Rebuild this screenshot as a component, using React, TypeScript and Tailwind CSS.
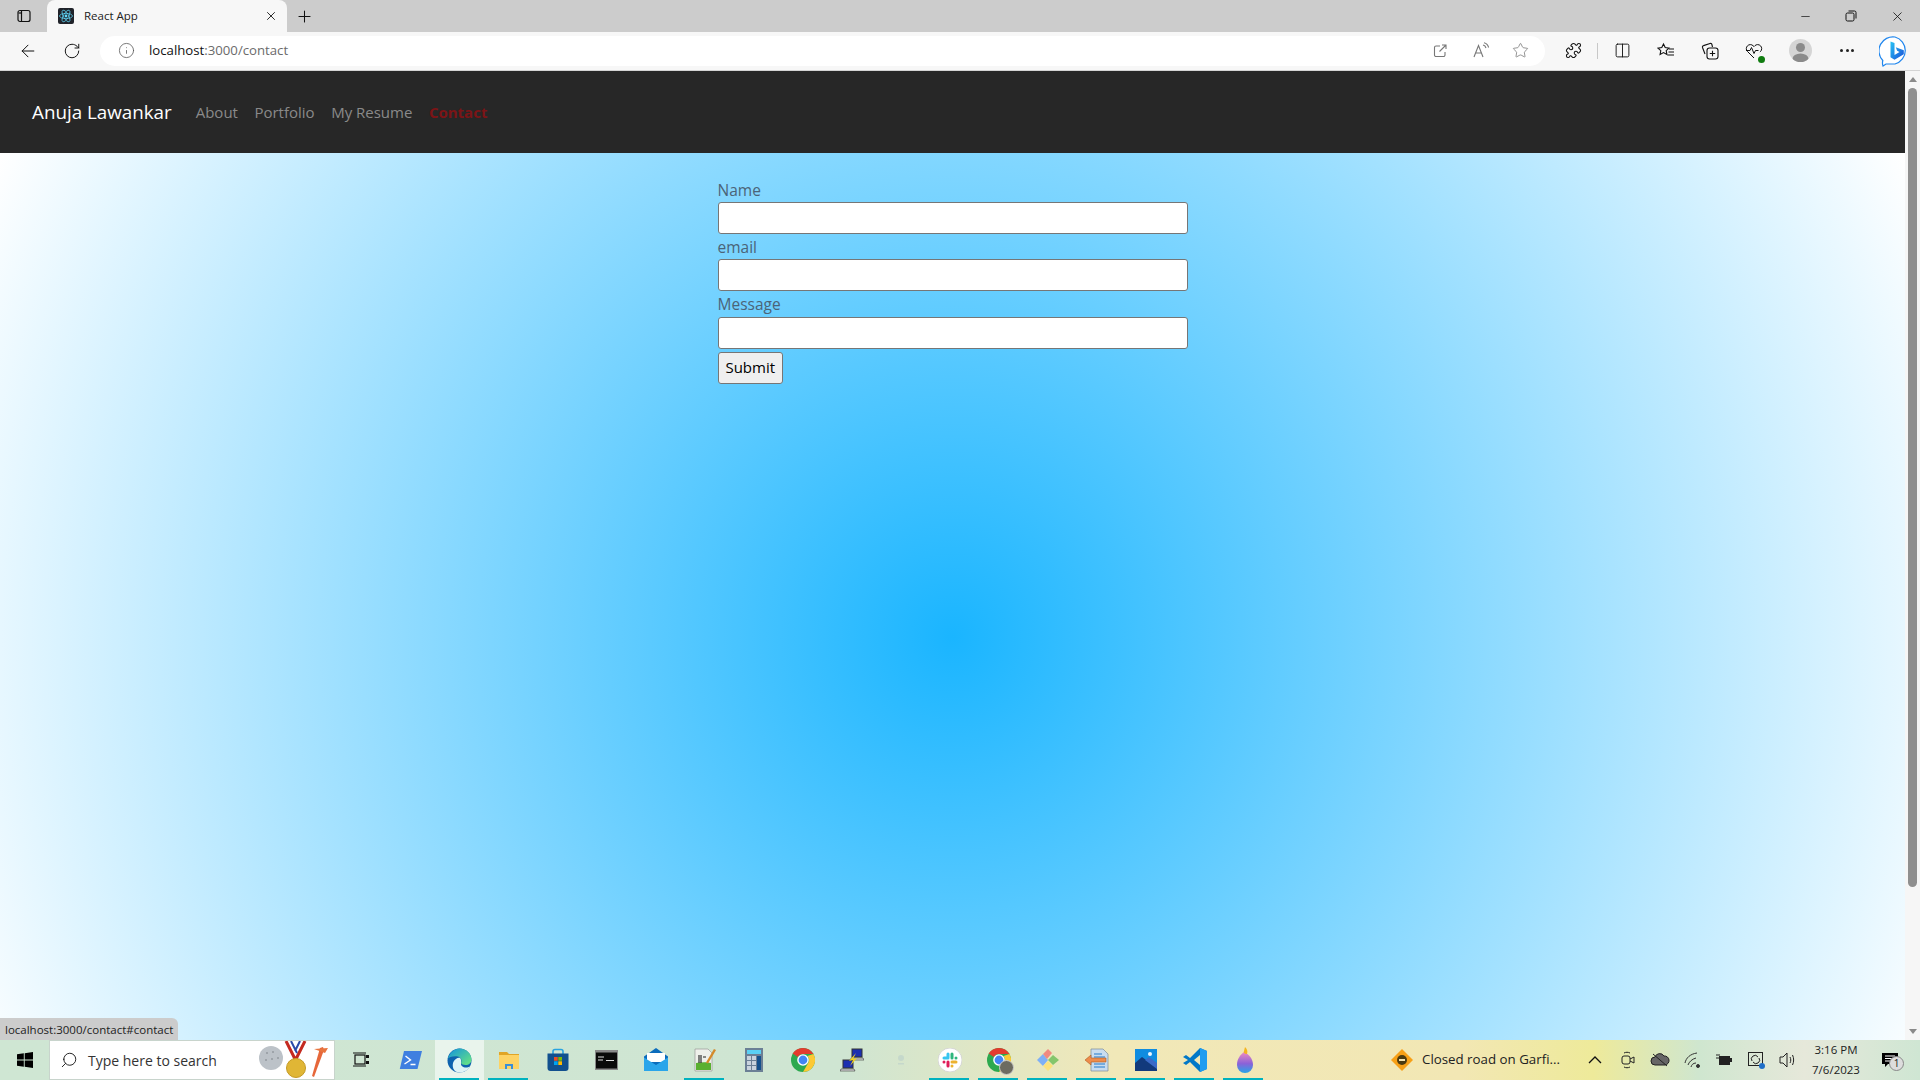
import { ArrowLeft, Columns2, Info, Minus, Plus, Puzzle, RotateCw, Search, Star, X } from "lucide-react";

const uiFont = "font-['Open_Sans','Noto_Sans',sans-serif]";

function Favicon() {
  return (
    <svg width="16" height="16" viewBox="0 0 16 16" className="rounded-[2px] bg-[#20232a]">
      <circle cx="8" cy="8" r="1.4" fill="#61dafb" />
      <g fill="none" stroke="#61dafb" strokeWidth="0.7">
        <ellipse cx="8" cy="8" rx="6.5" ry="2.6" />
        <ellipse cx="8" cy="8" rx="6.5" ry="2.6" transform="rotate(60 8 8)" />
        <ellipse cx="8" cy="8" rx="6.5" ry="2.6" transform="rotate(120 8 8)" />
      </g>
    </svg>
  );
}

function TabStrip() {
  return (
    <div className="flex h-8 shrink-0 items-end bg-[#cccccc]">
      <div className="flex h-8 w-[47px] items-center justify-center">
        <svg width="16" height="16" viewBox="0 0 16 16" fill="none" stroke="#111" strokeWidth="1.2">
          <rect x="2" y="2.5" width="12" height="11" rx="2" />
          <path d="M5.5 3v10" />
          <path d="M2.5 5h3" />
        </svg>
      </div>
      <div className="flex h-8 w-[240px] items-center rounded-t-lg bg-[#f7f7f7] pr-[9px] pl-[11px]">
        <Favicon />
        <span className="ml-[10px] flex-1 text-[11.5px] text-[#222]">React App</span>
        <X size={14} strokeWidth={1.5} className="text-[#111]" />
      </div>
      <div className="flex h-8 w-[34px] items-center justify-center">
        <Plus size={19} strokeWidth={1.3} className="text-[#111]" />
      </div>
      <div className="flex-1" />
      <div className="flex h-8 items-center text-[#111]">
        <div className="flex w-[46px] justify-center">
          <Minus size={13} strokeWidth={1.3} />
        </div>
        <div className="flex w-[46px] justify-center">
          <svg width="12" height="12" viewBox="0 0 12 12" fill="none" stroke="#111" strokeWidth="1">
            <rect x="1" y="3" width="8" height="8" rx="1.5" />
            <path d="M3.5 1h6a1.5 1.5 0 0 1 1.5 1.5v6" />
          </svg>
        </div>
        <div className="flex w-[46px] justify-center">
          <X size={15} strokeWidth={1.3} />
        </div>
      </div>
    </div>
  );
}

function ToolbarIcons() {
  return (
    <div className="flex h-full items-center">
      <div className="ml-[16px] flex w-[24px] justify-center">
        <Puzzle size={17} strokeWidth={1.5} className="text-[#111]" />
      </div>
      <div className="ml-[12px] h-4 w-px bg-[#c8c8c8]" />
      <div className="ml-[12px] flex w-[24px] justify-center">
        <Columns2 size={17} strokeWidth={1.3} className="text-[#111]" />
      </div>
      <div className="ml-[20px] flex w-[24px] justify-center">
        <svg width="18" height="18" viewBox="0 0 18 18" fill="none" stroke="#111" strokeWidth="1.1">
          <path d="M6.5 2l1.7 3.6 3.8.5-2.8 2.6.7 3.8-3.4-1.9L3.1 12.5l.7-3.8L1 6.1l3.8-.5z" />
          <path d="M12 7h5M11.5 10h5.5M10.5 13h6.5" />
        </svg>
      </div>
      <div className="ml-[20px] flex w-[24px] justify-center">
        <svg width="18" height="18" viewBox="0 0 18 18" fill="none" stroke="#111" strokeWidth="1.1">
          <path d="M4 12L1.5 5.5a1.5 1.5 0 0 1 1-1.9L9 1.5a1.5 1.5 0 0 1 1.9 1L11.5 5" />
          <rect x="6" y="6" width="11" height="11" rx="2.5" />
          <path d="M11.5 8.8v5.4M8.8 11.5h5.4" />
        </svg>
      </div>
      <div className="relative ml-[20px] flex w-[24px] justify-center">
        <svg width="18" height="18" viewBox="0 0 18 18" fill="none" stroke="#111" strokeWidth="1">
          <path d="M9 16L2.5 9.5a4 4 0 0 1 0-5.7 4 4 0 0 1 5.7 0l.8.8.8-.8a4 4 0 0 1 5.7 0 4 4 0 0 1 0 5.7l-.6.6" />
          <path d="M1 8.500h4l1.500-3 2.500 6 1.500-3h3" />
        </svg>
        <span className="absolute right-[1px] bottom-[-3px] h-[7px] w-[7px] rounded-full bg-[#107c10]" />
      </div>
      <div className="ml-[23px] flex h-[23px] w-[23px] items-end justify-center overflow-hidden rounded-full bg-[#d5d5d5]">
        <svg width="23" height="23" viewBox="0 0 23 23" fill="#8b8b8b">
          <circle cx="11.5" cy="8.5" r="4.5" />
          <ellipse cx="11.5" cy="20" rx="8" ry="5.5" />
        </svg>
      </div>
      <div className="ml-[23px] flex w-[24px] justify-center gap-[2.5px]">
        <span className="h-[3px] w-[3px] rounded-full bg-[#222]" />
        <span className="h-[3px] w-[3px] rounded-full bg-[#222]" />
        <span className="h-[3px] w-[3px] rounded-full bg-[#222]" />
      </div>
      <div className="ml-[20px]">
        <svg width="32" height="32" viewBox="0 0 32 32">
          <defs>
            <linearGradient id="bingB" x1="0" y1="0" x2="1" y2="1">
              <stop offset="0" stopColor="#28c4f4" />
              <stop offset="1" stopColor="#1a4fd8" />
            </linearGradient>
          </defs>
          <path
            d="M16 2a14 14 0 0 1 0 27H7l-3 2c-.7-2-.6-4-.2-5.500A14 14 0 0 1 16 2z"
            fill="#fff"
            stroke="#1f86ee"
            strokeWidth="1.2"
          />
          <path
            d="M11.500 6.500l4 1.500v12l5-3-2.400-1.200-1.300-3.600 8 3v4l-9.300 5.500-4-2.500z"
            fill="url(#bingB)"
          />
        </svg>
      </div>
    </div>
  );
}

function Toolbar() {
  return (
    <div className="flex h-[39px] shrink-0 items-center border-b border-[#d4d4d4] bg-[#f7f7f7] pb-px">
      <div className="flex w-[100px] items-center">
        <ArrowLeft size={20} strokeWidth={1.2} className="ml-[18px] text-[#111]" />
        <RotateCw size={18} strokeWidth={1.3} className="ml-[25px] text-[#111]" />
      </div>
      <div className="flex h-[30px] w-[1445px] items-center rounded-full bg-white pr-[16px] pl-[18px]">
        <Info size={17} strokeWidth={1.1} className="text-[#555]" />
        <span className="ml-[14px] flex-1 text-[13.2px] text-[#6b6b6b]">
          <span className="text-[#111]">localhost</span>:3000/contact
        </span>
        <svg width="14" height="14" viewBox="0 0 14 14" fill="none" stroke="#777" strokeWidth="1.1" className="mr-[26px]">
          <path d="M7 2H3a1.500 1.500 0 0 0-1.500 1.500v7.500A1.500 1.500 0 0 0 3 12.500h7.500a1.500 1.500 0 0 0 1.500-1.500V8" />
          <path d="M6.500 7.500L13 1M9 1h4v4" />
        </svg>
        <svg width="17" height="17" viewBox="0 0 17 17" fill="none" stroke="#777" strokeWidth="1.1" className="mr-[22px]">
          <path d="M1 15L5.500 3.500 10 15M2.800 11h5.500" />
          <path d="M10 3c1.500.3 2.500 1.300 3 3M11 .8c2.300.5 4 2.200 4.600 4.700" />
        </svg>
        <Star size={17} strokeWidth={1.1} className="text-[#777]" />
      </div>
      <ToolbarIcons />
    </div>
  );
}

function Navbar() {
  return (
    <nav className="flex h-[82px] shrink-0 items-center bg-[#272727] pl-8">
      <a href="#home" className="text-[18.8px] text-white">
        Anuja Lawankar
      </a>
      <div className="ml-[24px] flex items-center gap-[16.5px] text-[15px] text-[#8a8a8a]">
        <a href="#about">About</a>
        <a href="#portfolio">Portfolio</a>
        <a href="#resume">My Resume</a>
        <a href="#contact" className="font-bold text-[#7c1416]">
          Contact
        </a>
      </div>
    </nav>
  );
}

function Field({ label }: { label: string }) {
  return (
    <div>
      <label className="block h-[25.5px] pt-[1px] text-[15.5px] leading-6 text-[#4b6478]">{label}</label>
      <input type="text" className="block h-[31.9px] w-full rounded-[3px] border border-[#767676] bg-white" />
    </div>
  );
}

function ContactForm() {
  return (
    <form className="mx-auto w-[470px] pt-[23.5px]">
      <Field label="Name" />
      <Field label="email" />
      <Field label="Message" />
      <button
        type="button"
        className="mt-[3px] h-[32px] w-[65.5px] rounded-[3px] border border-[#767676] bg-[#efefef] text-[15px] text-black"
      >
        Submit
      </button>
    </form>
  );
}

function Scrollbar() {
  return (
    <div className="flex w-[15px] shrink-0 flex-col items-center bg-[#f6f6f6]">
      <div className="mt-[6px] h-0 w-0 border-x-[4px] border-b-[5px] border-x-transparent border-b-[#8a8a8a]" />
      <div className="mt-[6px] h-[799px] w-[9px] rounded-full bg-[#8f8f8f]" />
      <div className="flex-1" />
      <div className="mb-[6px] h-0 w-0 border-x-[4px] border-t-[5px] border-x-transparent border-t-[#8a8a8a]" />
    </div>
  );
}

function Windows() {
  return (
    <svg width="16" height="16" viewBox="0 0 16 16" fill="#000">
      <path d="M0 2.300L6.800 1.300v6.300H0zM7.700 1.200L16 0v7.600H7.700zM0 8.400h6.800v6.300L0 13.700zM7.700 8.400H16V16l-8.300-1.200z" />
    </svg>
  );
}

function Chrome() {
  return (
    <svg width="24" height="24" viewBox="0 0 24 24">
      <circle cx="12" cy="12" r="12" fill="#2da94f" />
      <path d="M12 0a12 12 0 0 1 10.400 6H12a6 6 0 0 0-5.200 3L1.700 5.500A12 12 0 0 1 12 0z" fill="#e33b2e" />
      <path d="M22.400 6A12 12 0 0 1 12 24l5.200-9A6 6 0 0 0 16.500 8z" fill="#fcc934" />
      <circle cx="12" cy="12" r="5.800" fill="#fff" />
      <circle cx="12" cy="12" r="4.400" fill="#4285f4" />
    </svg>
  );
}

const icons = [
  {
    id: "taskview",
    bar: false,
    svg: (
      <svg width="17" height="16" viewBox="0 0 17 16" fill="none" stroke="#111" strokeWidth="1.200">
        <rect x="2" y="3" width="10" height="9" />
        <path d="M0 1h13M0 14h13" />
        <path d="M14.500 3v3M14.500 9v3" strokeWidth="3" />
      </svg>
    ),
  },
  {
    id: "powershell",
    bar: false,
    svg: (
      <svg width="24" height="20" viewBox="0 0 24 20">
        <path d="M5 1h18l-4.500 18H.8z" fill="#3f7fe0" />
        <path d="M6.500 6l5 4-6 4M11.500 14.500h5" fill="none" stroke="#fff" strokeWidth="1.400" />
      </svg>
    ),
  },
  {
    id: "edge",
    bar: true,
    active: true,
    svg: (
      <svg width="25" height="25" viewBox="0 0 25 25">
        <defs>
          <linearGradient id="edgeG" x1="0.2" y1="0" x2="1" y2="0.7">
            <stop offset="0" stopColor="#1a9ad6" />
            <stop offset="1" stopColor="#5fdc8a" />
          </linearGradient>
        </defs>
        <circle cx="12.500" cy="12.500" r="12" fill="#0e62ae" />
        <path d="M.8 11C2.500 4 8 .5 12.500.5c7 0 12 5.500 12 11 0 3.500-2.500 5.500-6 5.500-2.500 0-4-1-4.500-2 1.200-2 .5-5.500-3-6.500-4-1-9.200.3-10.700 2.500z" fill="url(#edgeG)" />
        <path d="M14 15c-.5 3 2.500 5 6 4.500 1.500-.2 2.500-.6 3-1-1.800 3.600-6 6-10 6-1.500 0-2.800-.3-3.800-.8-3.500-2-4.200-6.500-2.700-10 1-2.300 3.500-4 5.500-4 1.500 0 2.500 1.500 2 5.300z" fill="#dff3f6" />
      </svg>
    ),
  },
  {
    id: "folder",
    bar: true,
    svg: (
      <svg width="22" height="20" viewBox="0 0 22 20">
        <path d="M1 2h8l2 2h10v3H1z" fill="#e0a526" />
        <path d="M1 5h20v14H1z" fill="#fdd364" />
        <path d="M7 19v-5h8v5h-2v-3H9v3z" fill="#3a8fd8" />
      </svg>
    ),
  },
  {
    id: "store",
    bar: false,
    svg: (
      <svg width="24" height="24" viewBox="0 0 24 24">
        <path d="M7 6V3.500A2 2 0 0 1 9 1.500h6a2 2 0 0 1 2 2V6" fill="none" stroke="#29a3e0" strokeWidth="1.600" />
        <path d="M1.500 5.500h21V20a3 3 0 0 1-3 3h-15a3 3 0 0 1-3-3z" fill="#11508e" />
        <rect x="8" y="9" width="3.700" height="3.700" fill="#ea4f25" />
        <rect x="12.300" y="9" width="3.700" height="3.700" fill="#7fba00" />
        <rect x="8" y="13.300" width="3.700" height="3.700" fill="#00a4ef" />
        <rect x="12.300" y="13.300" width="3.700" height="3.700" fill="#ffb900" />
      </svg>
    ),
  },
  {
    id: "cmd",
    bar: false,
    svg: (
      <svg width="23" height="20" viewBox="0 0 23 20">
        <rect x="0" y="0" width="23" height="20" fill="#8a8a8a" />
        <rect x="1" y="2.500" width="21" height="16" fill="#0a0a0a" />
        <path d="M3 7h6M11 10.500h8M3 10h5" stroke="#ddd" strokeWidth="1.200" />
      </svg>
    ),
  },
  {
    id: "mail",
    bar: false,
    svg: (
      <svg width="24" height="24" viewBox="0 0 24 24">
        <path d="M0 8.500L12 0l12 8.500V23H0z" fill="#0b6cbc" />
        <path d="M3 5h18v9H3z" fill="#fff" />
        <path d="M0 9.500L12 17 24 9.500V23H0z" fill="#2aa5ea" />
      </svg>
    ),
  },
  {
    id: "notepad",
    bar: true,
    svg: (
      <svg width="24" height="24" viewBox="0 0 24 24">
        <path d="M2 1h13l4 4v18H2z" fill="#eef0ea" stroke="#9a9a9a" strokeWidth="0.700" />
        <path d="M3 15c5-1 11-1 15 0v7H3z" fill="#5ab030" />
        <path d="M6 7v8M8 7v8M10 9h3" stroke="#222" strokeWidth="1.100" />
        <path d="M14 15L22 1.500" stroke="#d48a2a" strokeWidth="2.400" />
      </svg>
    ),
  },
  {
    id: "calc",
    bar: false,
    svg: (
      <svg width="18" height="24" viewBox="0 0 18 24">
        <rect width="18" height="24" fill="#6b7f95" />
        <rect x="2" y="2" width="14" height="4" fill="#5ad0f5" />
        <g fill="#c9d3de">
          <rect x="2" y="8" width="4" height="4" />
          <rect x="7" y="8" width="4" height="4" />
          <rect x="2" y="13" width="4" height="4" />
          <rect x="7" y="13" width="4" height="4" />
          <rect x="2" y="18" width="4" height="4" />
          <rect x="7" y="18" width="4" height="4" />
        </g>
        <rect x="12" y="8" width="4" height="14" fill="#15508c" />
      </svg>
    ),
  },
  { id: "chrome", bar: false, svg: <Chrome /> },
  {
    id: "putty",
    bar: false,
    svg: (
      <svg width="24" height="24" viewBox="0 0 24 24">
        <rect x="12" y="1" width="10" height="8" fill="#1c2fb0" stroke="#333" />
        <path d="M11 10h12l1 2H11z" fill="#ddd" stroke="#333" strokeWidth="0.600" />
        <rect x="3" y="12" width="10" height="8" fill="#1c2fb0" stroke="#333" />
        <path d="M1 21h13l1 2H0z" fill="#ddd" stroke="#333" strokeWidth="0.600" />
        <path d="M16 5l-7 8 4-1-3 6 7-8-4 1z" fill="#f4d31f" />
      </svg>
    ),
  },
  {
    id: "faded",
    bar: false,
    svg: (
      <svg width="8" height="12" viewBox="0 0 8 12" fill="#c5d8cb">
        <circle cx="4" cy="4" r="3" />
        <rect x="1" y="9" width="6" height="1.500" />
      </svg>
    ),
  },
  {
    id: "slack",
    bar: true,
    svg: (
      <svg width="24" height="24" viewBox="0 0 24 24">
        <circle cx="12" cy="12" r="12" fill="#fff" stroke="#cfcfcf" strokeWidth="0.800" />
        <g strokeWidth="3" strokeLinecap="round">
          <path d="M10 6v4M6 10h4" stroke="#36c5f0" />
          <path d="M14 6v4M18 10h0" stroke="#2eb67d" />
          <path d="M14 14h4M14 18h0" stroke="#ecb22e" />
          <path d="M6 14h0M10 14v4" stroke="#e01e5a" />
        </g>
      </svg>
    ),
  },
  {
    id: "chrome2",
    bar: true,
    svg: (
      <div className="relative">
        <Chrome />
        <span className="absolute right-[-3px] bottom-[-3px] h-[15px] w-[15px] rounded-full border border-[#ccc] bg-[#6c6b60]" />
      </div>
    ),
  },
  {
    id: "git",
    bar: true,
    svg: (
      <svg width="24" height="24" viewBox="0 0 24 24">
        <path d="M1 12l6-6 5 6-5 6z" fill="#7fb0f5" />
        <path d="M7 6l5-5 4 4-5 6z" fill="#f08a80" />
        <path d="M12 12l5-5 6 5-6 5z" fill="#84c66c" />
        <path d="M7 18l5-5 5 5-5 5z" fill="#fde27c" />
      </svg>
    ),
  },
  {
    id: "transfer",
    bar: true,
    svg: (
      <svg width="24" height="24" viewBox="0 0 24 24">
        <path d="M6 1h12l5 5v17H6z" fill="#c8dcf0" stroke="#7a8a9a" strokeWidth="0.700" />
        <path d="M9 6h8M9 9h11M9 16h11M9 19h11" stroke="#5a9ad8" strokeWidth="1.400" />
        <path d="M0 12l6-5v3h15v4H6v3z" fill="#ee8c4c" stroke="#b05a20" strokeWidth="0.600" />
      </svg>
    ),
  },
  {
    id: "photos",
    bar: true,
    svg: (
      <svg width="22" height="22" viewBox="0 0 22 22">
        <rect width="22" height="22" fill="#0f8ce0" />
        <circle cx="15" cy="5" r="2" fill="#eaf6ff" />
        <path d="M0 22V14l7-6 15 11v3z" fill="#123a7c" />
        <path d="M10 11l4-3 8 6v6z" fill="#3a6ac8" />
      </svg>
    ),
  },
  {
    id: "vscode",
    bar: true,
    svg: (
      <svg width="24" height="24" viewBox="0 0 24 24">
        <path d="M17 0l7 3v18l-7 3-10-10-4 3-3-2 5-3-5-3 3-2 4 3z" fill="#0078c8" />
        <path d="M17 0l7 3v18l-7 3z" fill="#1f9cf0" />
        <path d="M17 7l-6 5 6 5z" fill="#f1e8b8" />
      </svg>
    ),
  },
  {
    id: "paint",
    bar: true,
    svg: (
      <svg width="20" height="26" viewBox="0 0 20 26">
        <defs>
          <linearGradient id="paintG" x1="0" y1="0" x2="0" y2="1">
            <stop offset="0" stopColor="#f08ac0" />
            <stop offset="0.550" stopColor="#8b62d8" />
            <stop offset="1" stopColor="#25a5e8" />
          </linearGradient>
        </defs>
        <path d="M10 5c5 2 9 7 9 13a8 8 0 0 1-16 0C3 12 6 8 10 5z" fill="url(#paintG)" />
        <path d="M11 0c2 2 3 4 2 7-2 0-4-1-3-3z" fill="#f4b51f" />
      </svg>
    ),
  },
];

function TaskbarItem({ bar, active, children }: { bar: boolean; active?: boolean; children: React.ReactNode }) {
  return (
    <div
      className={
        active
          ? "relative flex h-10 w-[49px] items-center justify-center bg-[#e9f4ec]"
          : "relative flex h-10 w-[49px] items-center justify-center"
      }
    >
      {children}
      {bar && <span className="absolute bottom-0 left-[4px] h-[2px] w-[40px] bg-[#00b2bf]" />}
    </div>
  );
}

function Taskbar() {
  return (
    <div className="flex h-10 shrink-0 items-center bg-[linear-gradient(90deg,#cfe6d3_0%,#cfe5d2_44%,#f1e8b8_58%,#f2e7b4_76%,#eeea9a_83%,#cfe6cf_88.5%,#e6e8da_94%,#cfe6d3_100%)] text-[#111]">
      <div className="flex w-[49px] justify-center">
        <Windows />
      </div>
      <div className="mr-[2px] flex h-[40px] w-[286px] items-center overflow-hidden border border-[#c8d4cc] bg-white pl-[10px]">
        <Search size={18} strokeWidth={1.200} className="-scale-x-100 text-[#111]" />
        <span className="ml-[10px] flex-1 text-[14px] text-[#333]">Type here to search</span>
        <svg width="72" height="38" viewBox="0 0 72 38" className="mr-[3px]">
          <circle cx="12" cy="17" r="12" fill="#bcc2c8" />
          <g fill="#959aa0">
            <circle cx="8" cy="12" r="1" />
            <circle cx="14" cy="11" r="1" />
            <circle cx="7" cy="19" r="1" />
            <circle cx="13" cy="18" r="1" />
            <circle cx="19" cy="17" r="1" />
          </g>
          <path d="M27 0l9 18M46 0l-9 18" stroke="#c42a20" strokeWidth="3" />
          <path d="M32 0l6 12M41 0l-5 10" stroke="#2a4aa8" strokeWidth="2" />
          <circle cx="37" cy="27" r="9.500" fill="#e0b635" stroke="#c49a25" />
          <path d="M64 6l-3 1-8 28 2 1 10-27z" fill="#e6673a" />
          <path d="M55 8l14-1-3 5z" fill="#e8743e" />
        </svg>
      </div>
      {icons.map((item) => (
        <TaskbarItem key={item.id} bar={item.bar} active={item.active}>
          {item.svg}
        </TaskbarItem>
      ))}
      <div className="ml-[123px] flex items-center">
        <svg width="22" height="22" viewBox="0 0 22 22">
          <path d="M11 0l11 11-11 11L0 11z" fill="#f7a016" />
          <circle cx="11" cy="11" r="5" fill="#4a3a10" />
          <rect x="8" y="10" width="6" height="2" fill="#f4e3b0" />
        </svg>
        <span className="ml-[9px] w-[139px] text-[13.300px] whitespace-nowrap text-[#222]">Closed road on Garfi...</span>
      </div>
      <svg width="14" height="10" viewBox="0 0 14 10" fill="none" stroke="#111" strokeWidth="1.300" className="ml-[27px]">
        <path d="M1 8l6-6 6 6" />
      </svg>
      <svg width="14" height="18" viewBox="0 0 14 18" fill="none" stroke="#222" strokeWidth="1" className="ml-[19px]">
        <rect x="1" y="5" width="8" height="8" rx="2" />
        <path d="M9 8l4-2v6l-4-2M3 2c2-1 4-1 6 0M3 16c2 1 4 1 6 0" />
      </svg>
      <svg width="20" height="16" viewBox="0 0 20 16" fill="#666" stroke="#222" strokeWidth="1" className="ml-[15px]">
        <path d="M5 13a4 4 0 0 1 0-8 5 5 0 0 1 9-1 4.500 4.500 0 0 1 1 9z" />
        <path d="M3 2l14 12" />
      </svg>
      <svg width="18" height="16" viewBox="0 0 18 16" fill="none" stroke="#333" strokeWidth="1" className="ml-[14px]">
        <path d="M1 11c1-5 5-9 12-10M4 13c1-3 4-6 8-7M7 15c.5-2 2-4 5-4" />
        <circle cx="14" cy="14" r="1.500" fill="#333" />
      </svg>
      <svg width="16" height="12" viewBox="0 0 16 12" className="ml-[14px]">
        <rect x="3" y="2" width="11" height="9" fill="#222" />
        <rect x="14" y="4" width="2" height="4" fill="#222" />
        <path d="M0 1h4M0 4h4" stroke="#222" />
      </svg>
      <div className="relative ml-[16px]">
        <svg width="16" height="16" viewBox="0 0 16 16" fill="none" stroke="#222" strokeWidth="1">
          <rect x=".5" y=".5" width="14" height="13" />
          <path d="M4 9a3.500 3.500 0 0 1 6-4M11 6a3.500 3.500 0 0 1-6 4" />
        </svg>
        <span className="absolute right-[-1px] bottom-[-1px] h-[6px] w-[6px] rounded-full bg-[#1f6fc8]" />
      </div>
      <svg width="18" height="16" viewBox="0 0 18 16" fill="none" stroke="#222" strokeWidth="1" className="ml-[15px]">
        <path d="M1 5h3l4-4v14l-4-4H1zM11 5c1 2 1 4 0 6M13.500 3c1.500 3 1.500 7 0 10" />
      </svg>
      <div className="ml-[14px] flex w-[50px] flex-col items-center text-[11.500px] leading-[20px] text-[#222]">
        <span className="whitespace-nowrap">3:16 PM</span>
        <span className="whitespace-nowrap">7/6/2023</span>
      </div>
      <div className="relative ml-[21px]">
        <svg width="16" height="16" viewBox="0 0 16 16" fill="#000">
          <path d="M0 1h16v11H6l-3 3v-3H0z" />
          <path d="M3 4h10M3 6.500h10M3 9h7" stroke="#fff" />
        </svg>
        <span className="absolute top-[4px] left-[7px] flex h-[15px] w-[15px] items-center justify-center rounded-full border border-[#888] bg-[#ddd] text-[10px] text-[#222]">
          1
        </span>
      </div>
    </div>
  );
}

export default function App() {
  return (
    <div className={`relative flex h-screen w-full flex-col overflow-hidden ${uiFont}`}>
      <TabStrip />
      <Toolbar />
      <div className="flex min-h-0 flex-1">
        <div className="flex min-w-0 flex-1 flex-col">
          <Navbar />
          <main className="flex-1 bg-[radial-gradient(circle_1067px_at_50%_484px,#1ab5ff_0%,#ffffff_100%)]">
            <ContactForm />
          </main>
        </div>
        <Scrollbar />
      </div>
      <Taskbar />
      <div className="absolute bottom-[40px] left-0 rounded-tr-md bg-[#cccccc] px-[5px] py-[3.500px] text-[11.500px] leading-[15px] text-[#222]">
        localhost:3000/contact#contact
      </div>
    </div>
  );
}
